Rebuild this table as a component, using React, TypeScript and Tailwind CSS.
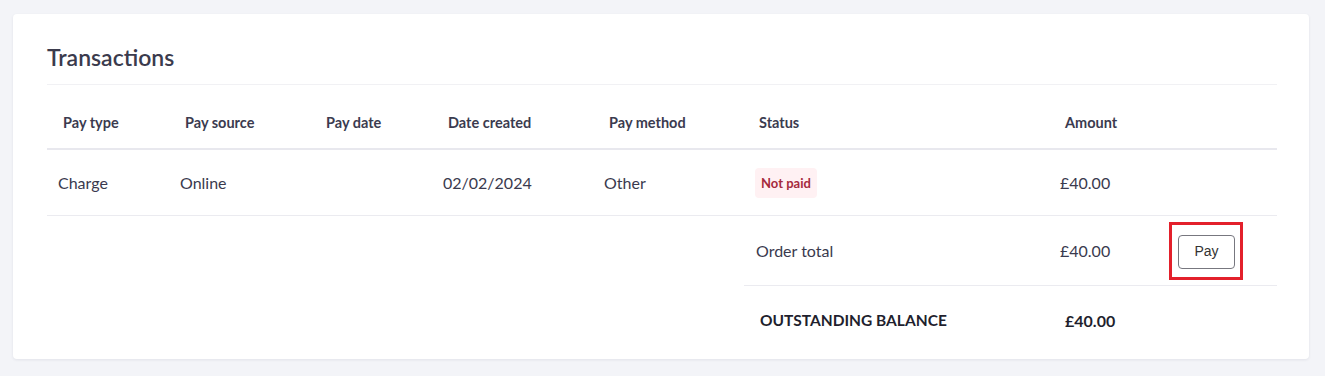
export default function App() {
  const cols = "grid grid-cols-[122px_141px_122px_161px_151px_305px_156px_72px]";

  return (
    <div className="min-h-[376px] bg-[#f3f4f8] pt-[14px] pl-[13px] pr-[16px] font-['Lato','Open_Sans',sans-serif] text-[#3a3a4e]">
      <div className="h-[345px] rounded-[4px] bg-white pl-[34px] pr-[32px] pt-[30px] shadow-[0_1px_3px_rgba(20,20,60,0.08)]">
        <h2 className="h-[41px] border-b border-[#f1f1f4] text-[23px] font-semibold leading-[26px] text-[#3b3b4d]">Transactions</h2>

        <div className={`${cols} h-[65px] items-center border-b-2 border-[#e8e8ee] pt-[12px] text-[14.5px] font-bold text-[#3b3b4f]`}>
          <div className="pl-[16px]">Pay type</div>
          <div className="pl-[16px]">Pay source</div>
          <div className="pl-[16px]">Pay date</div>
          <div className="pl-[16px]">Date created</div>
          <div className="pl-[16px]">Pay method</div>
          <div className="pl-[15px]">Status</div>
          <div className="pl-[16px]">Amount</div>
          <div />
        </div>

        <div className={`${cols} h-[66px] items-center border-b border-[#ebebf0] text-[16px] text-[#3a3a4e]`}>
          <div className="pl-[11px]">Charge</div>
          <div className="pl-[11px]">Online</div>
          <div />
          <div className="pl-[11px]">02/02/2024</div>
          <div className="pl-[11px]">Other</div>
          <div className="pl-[11px]">
            <span className="inline-block rounded-[4px] bg-[#fff1f3] px-[6px] py-[6px] text-[13px] font-bold leading-[18px] text-[#a52a3d]">Not paid</span>
          </div>
          <div className="pl-[11px]">£40.00</div>
          <div />
        </div>

        <div className="ml-[697px]">
          <div className="grid h-[70px] grid-cols-[305px_109px_1fr] items-center border-b border-[#ebebf0] text-[16px]">
            <div className="pl-[12px]">Order total</div>
            <div className="pl-[11px]">£40.00</div>
            <div className="pl-[11px]">
              <div className="inline-flex border-[3px] border-[#e3202b] pb-[8px] pl-[6px] pr-[5px] pt-[10px]">
                <button className="h-[34px] w-[57px] rounded-[4px] border border-[#77777f] bg-white font-['Liberation_Sans',Arial,sans-serif] text-[14px] text-[#333]">Pay</button>
              </div>
            </div>
          </div>
          <div className="grid h-[70px] grid-cols-[305px_1fr] items-center text-[15.5px] font-bold text-[#1f1f2e]">
            <div className="pl-[16px]">OUTSTANDING BALANCE</div>
            <div className="pl-[16px] text-[16px]">£40.00</div>
          </div>
        </div>
      </div>
    </div>
  );
}
